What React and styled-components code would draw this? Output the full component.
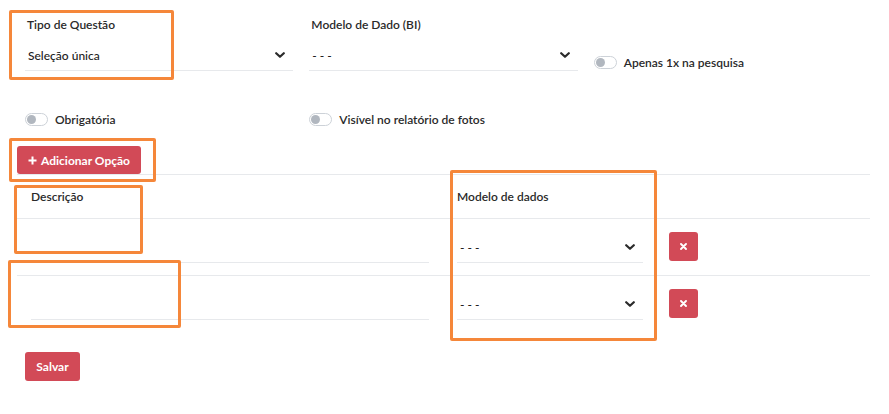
import styled, { createGlobalStyle } from "styled-components";

const GlobalStyle = createGlobalStyle`
  body {
    margin: 0;
    background: #ffffff;
    font-family: Lato, "Open Sans", sans-serif;
    font-size: 12px;
    color: #212529;
  }
`;

const red = "#d24a57";
const line = "#e7e9ec";
const orange = "#f5873a";

function Chevron() {
  return (
    <svg width="10" height="7" viewBox="0 0 10 7">
      <polyline
        points="1.2,1.2 5,4.8 8.8,1.2"
        fill="none"
        stroke="#2b2b2b"
        strokeWidth="2.2"
        strokeLinecap="round"
        strokeLinejoin="round"
      />
    </svg>
  );
}

function Select({ value }) {
  return (
    <SelectBox>
      <span>{value}</span>
      <Chevron />
    </SelectBox>
  );
}

function Switch({ label }) {
  return (
    <SwitchRow>
      <Track>
        <Knob />
      </Track>
      <span>{label}</span>
    </SwitchRow>
  );
}

function OptionRow() {
  return (
    <BodyRow>
      <Cell>
        <TextInput />
      </Cell>
      <Cell>
        <Select value="- - -" />
      </Cell>
      <ActionCell>
        <DeleteButton>
          <svg width="7" height="7" viewBox="0 0 7 7">
            <path d="M1 1 L6 6 M6 1 L1 6" stroke="#fff" strokeWidth="1.9" strokeLinecap="round" />
          </svg>
        </DeleteButton>
      </ActionCell>
    </BodyRow>
  );
}

export default function App() {
  return (
    <Page>
      <GlobalStyle />
      <FormRow>
        <Column>
          <Label>Tipo de Questão</Label>
          <Select value="Seleção única" />
        </Column>
        <Column>
          <Label>Modelo de Dado (BI)</Label>
          <Select value="- - -" />
        </Column>
        <Column $top={38}>
          <Switch label="Apenas 1x na pesquisa" />
        </Column>
      </FormRow>

      <SwitchLine>
        <Column>
          <Switch label="Obrigatória" />
        </Column>
        <Column>
          <Switch label="Visível no relatório de fotos" />
        </Column>
      </SwitchLine>

      <AddButton>
        <svg width="9" height="9" viewBox="0 0 9 9">
          <path d="M4.5 0.5 V8.5 M0.5 4.5 H8.5" stroke="#fff" strokeWidth="2" />
        </svg>
        Adicionar Opção
      </AddButton>

      <Table>
        <HeadRow>
          <HeadCell>Descrição</HeadCell>
          <HeadCell>Modelo de dados</HeadCell>
          <HeadCell />
        </HeadRow>
        <OptionRow />
        <OptionRow />
      </Table>

      <SaveButton>Salvar</SaveButton>

      <Mark style={{ left: 9, top: 10, width: 165, height: 70 }} />
      <Mark style={{ left: 9, top: 138, width: 147, height: 44 }} />
      <Mark style={{ left: 14, top: 185, width: 129, height: 69 }} />
      <Mark style={{ left: 8, top: 260, width: 173, height: 68 }} />
      <Mark style={{ left: 450, top: 170, width: 207, height: 171 }} />
    </Page>
  );
}

const Page = styled.div`
  position: relative;
  width: 853px;
  padding: 17px 19px 30px 17px;
`;

const FormRow = styled.div`
  display: grid;
  grid-template-columns: repeat(3, 1fr);
`;

const SwitchLine = styled(FormRow)`
  margin-top: 41px;
`;

const Column = styled.div`
  padding: ${({ $top }) => $top || 0}px 8px 0;
`;

const Label = styled.div`
  font-weight: 600;
  line-height: 15px;
  margin-bottom: 8px;
  padding-left: 2px;
  color: #2a2a2a;
`;

const SelectBox = styled.div`
  height: 30px;
  display: flex;
  align-items: center;
  justify-content: space-between;
  padding: 0 8px 0 3px;
  border-bottom: 1px solid ${line};
  color: #222;
  font-size: 12px;
  font-weight: 500;
`;

const SwitchRow = styled.div`
  display: flex;
  align-items: center;
  gap: 7px;
  line-height: 15px;
  font-weight: 600;
  color: #2a2a2a;
`;

const Track = styled.div`
  position: relative;
  width: 21px;
  height: 11px;
  border: 1px solid #cdd2d8;
  border-radius: 7px;
  background: #fff;
`;

const Knob = styled.div`
  position: absolute;
  left: 1px;
  top: 1px;
  width: 9px;
  height: 9px;
  border-radius: 50%;
  background: #b1b7bf;
`;

const AddButton = styled.button`
  display: flex;
  align-items: center;
  gap: 4px;
  height: 28px;
  margin-top: 19px;
  padding: 0 11px 0 11px;
  border: none;
  border-radius: 3px;
  background: ${red};
  color: #fff;
  font-family: Lato, sans-serif;
  font-size: 12px;
  font-weight: 700;
`;

const Table = styled.div`
  border-top: 1px solid ${line};
  width: 853px;
`;

const HeadRow = styled.div`
  display: grid;
  grid-template-columns: 426px 214px 1fr;
  height: 43px;
  align-items: center;
`;

const HeadCell = styled.div`
  padding: 0 14px;
  font-weight: 600;
  color: #2a2a2a;
`;

const BodyRow = styled.div`
  display: grid;
  grid-template-columns: 426px 214px 1fr;
  height: 56px;
  border-top: 1px solid ${line};
`;

const Cell = styled.div`
  padding: 13px 14px 0;
`;

const ActionCell = styled.div`
  padding: 13px 12px 0;
`;

const TextInput = styled.div`
  height: 30px;
  border-bottom: 1px solid ${line};
`;

const DeleteButton = styled.button`
  width: 29px;
  height: 29px;
  display: flex;
  align-items: center;
  justify-content: center;
  padding: 0;
  border: none;
  border-radius: 3px;
  background: ${red};
`;

const SaveButton = styled.button`
  margin: 20px 0 0 8px;
  width: 55px;
  height: 29px;
  border: none;
  border-radius: 3px;
  background: ${red};
  color: #fff;
  font-family: Lato, sans-serif;
  font-size: 12px;
  font-weight: 700;
`;

const Mark = styled.div`
  position: absolute;
  box-sizing: border-box;
  border: 3px solid ${orange};
  border-radius: 2px;
  pointer-events: none;
`;
